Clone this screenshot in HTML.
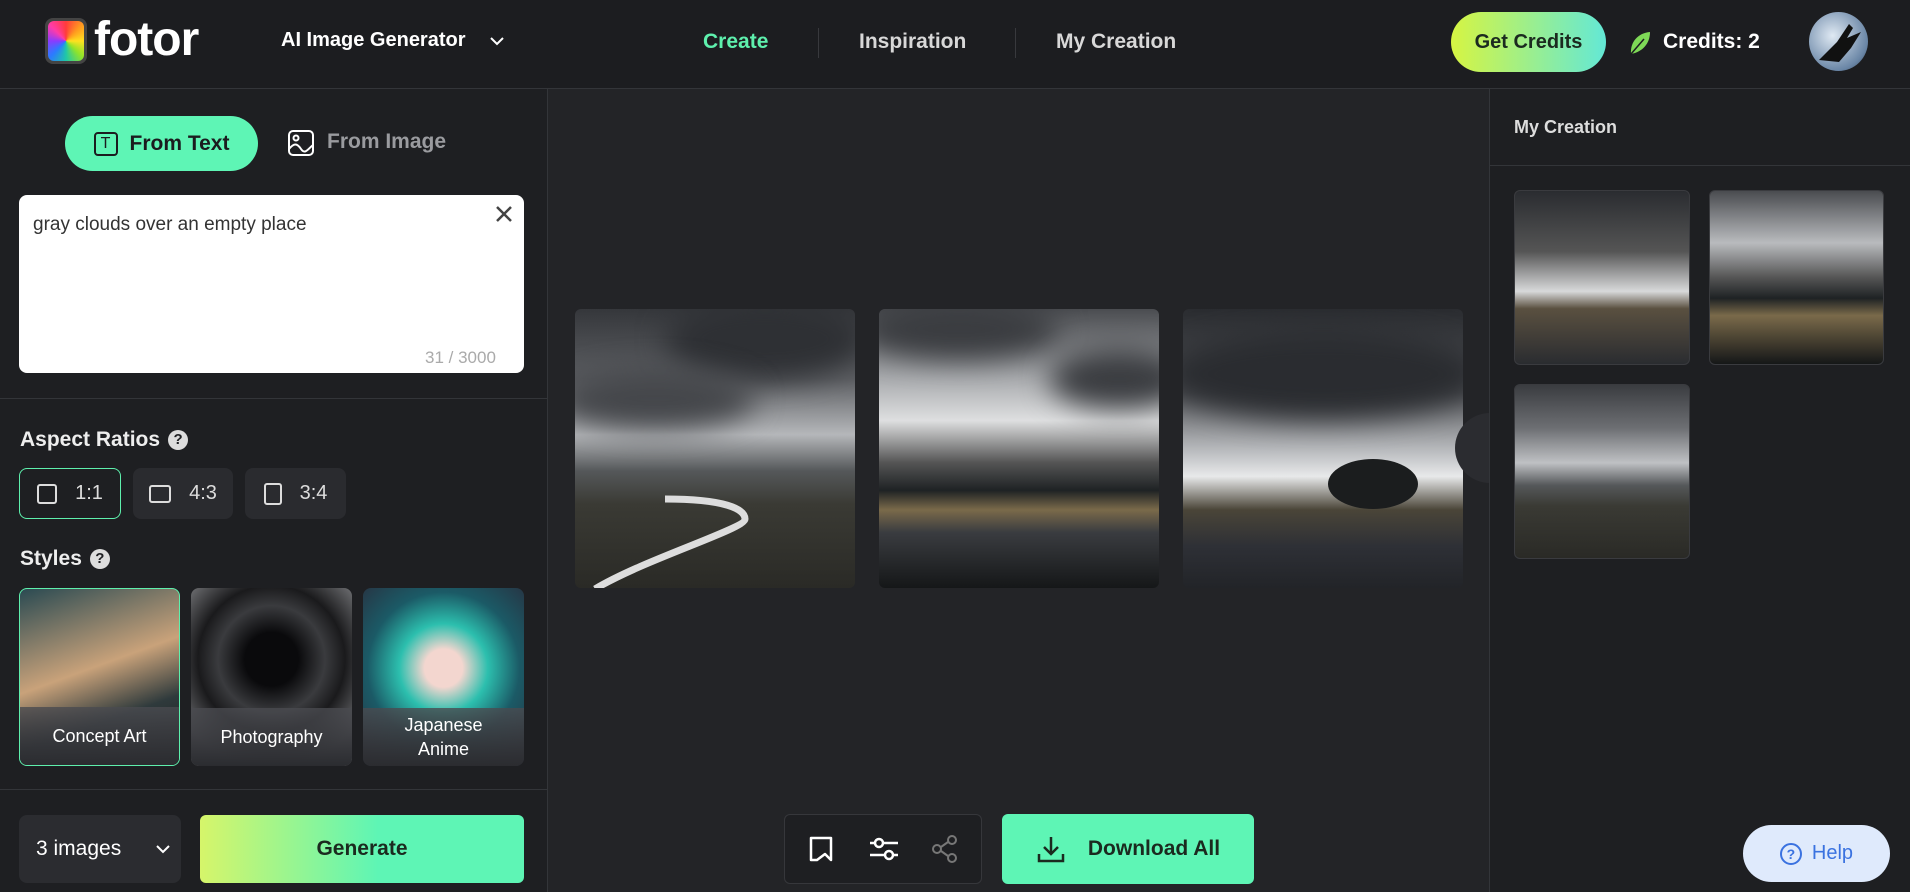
<!DOCTYPE html>
<html><head><meta charset="utf-8">
<style>
*{box-sizing:border-box;margin:0;padding:0}
body{width:1910px;height:892px;overflow:hidden;background:#232427;font-family:"Liberation Sans",sans-serif;color:#fff;position:relative}
.abs{position:absolute}
.hdr{left:0;top:0;width:1910px;height:89px;background:#1c1d20;border-bottom:1px solid #333539}
.left{left:0;top:89px;width:548px;height:803px;background:#1e1f22;border-right:1px solid #333539}
.right{left:1489px;top:89px;width:421px;height:803px;background:#1e1f22;border-left:1px solid #333539}
.nav{top:30px;font-size:21px;font-weight:bold;color:#d8d8d8}
.sep{top:28px;width:1px;height:30px;background:#38393d}
.ar{top:468px;height:51px;border-radius:8px;background:#2a2b2f;font-size:20px;display:flex;align-items:center;justify-content:center;gap:18px;color:#ddd}
.ar i{display:inline-block;width:20px;height:20px;border:2px solid #ddd;border-radius:3px}
.card{top:588px;width:161px;height:178px;border-radius:8px;overflow:hidden}
.card .lbl{position:absolute;left:0;bottom:0;width:100%;height:58px;background:linear-gradient(#4a4b50cc,#2b2c30);display:flex;align-items:center;justify-content:center;text-align:center;font-size:18px;line-height:24px}
.img{border-radius:6px;overflow:hidden}
.q{display:inline-block;width:20px;height:20px;border-radius:50%;background:#ddd;color:#1e1f22;font-size:15px;font-weight:bold;text-align:center;line-height:20px;vertical-align:middle;margin-left:8px}
.cl{position:absolute;border-radius:50%;background:#2e3034;filter:blur(14px)}
</style></head><body>
<div class="abs hdr"></div>
<div class="abs" style="left:45px;top:18px;width:42px;height:46px;border-radius:8px;background:#444;padding:3px">
<div style="width:100%;height:100%;border-radius:6px;background:conic-gradient(from 0deg,#ff3b3b,#ff9a1f,#ffe11f,#8fe32b,#1fc7a8,#2b7bff,#8a3bff,#ff3ba8,#ff3b3b)"></div></div>
<div class="abs" style="left:94px;top:12px;font-size:48px;font-weight:bold;letter-spacing:-1px">fotor</div>
<div class="abs" style="left:281px;top:29px;font-size:20px;font-weight:bold">AI Image Generator</div>
<svg class="abs" style="left:489px;top:35px" width="16" height="12" viewBox="0 0 16 12"><path d="M2 3l6 6 6-6" stroke="#fff" stroke-width="2" fill="none"/></svg>
<div class="abs nav" style="left:703px;color:#5ef0ad">Create</div>
<div class="abs sep" style="left:818px"></div>
<div class="abs nav" style="left:859px">Inspiration</div>
<div class="abs sep" style="left:1015px"></div>
<div class="abs nav" style="left:1056px">My Creation</div>
<div class="abs" style="left:1451px;top:12px;width:155px;height:60px;border-radius:30px;background:linear-gradient(90deg,#d6f542,#63e8d6);color:#1b2a1f;font-size:20px;font-weight:bold;display:flex;align-items:center;justify-content:center">Get Credits</div>
<svg class="abs" style="left:1628px;top:30px" width="24" height="26" viewBox="0 0 24 26"><path d="M3 24C2 12 10 3 22 2 22 14 14 22 3 24z" fill="#7ed957"/><path d="M3 24L16 9" stroke="#1c1d20" stroke-width="1.5"/></svg>
<div class="abs" style="left:1663px;top:30px;font-size:21px;font-weight:bold">Credits: 2</div>
<div class="abs" style="left:1809px;top:12px;width:59px;height:59px;border-radius:50%;background:radial-gradient(circle at 40% 40%,#dfe9f3,#6a86a6 70%,#2a3a50)"><svg width="59" height="59"><path d="M10 48 L28 30 L40 12 L44 16 L38 26 L52 20 L42 36 L30 50 Z" fill="#111"/></svg></div>

<div class="abs left"></div>
<div class="abs" style="left:65px;top:116px;width:193px;height:55px;border-radius:28px;background:#5ef5b5;display:flex;align-items:center;justify-content:center;gap:12px;color:#1b1c1f;font-size:21px;font-weight:bold"><span style="display:inline-block;width:24px;height:24px;border:2px solid #1b1c1f;border-radius:4px;font-size:16px;text-align:center;line-height:20px;font-weight:normal">T</span>From Text</div>
<svg class="abs" style="left:287px;top:129px" width="28" height="28" viewBox="0 0 28 28"><rect x="2" y="2" width="24" height="24" rx="4" stroke="#fff" stroke-width="2" fill="none"/><path d="M2 20c5-6 8-6 12 0s7 0 12-4" stroke="#fff" stroke-width="2" fill="none"/><circle cx="9" cy="9" r="2.5" stroke="#fff" stroke-width="2" fill="none"/></svg>
<div class="abs" style="left:327px;top:130px;font-size:21px;font-weight:bold;color:#9a9b9f">From Image</div>
<div class="abs" style="left:19px;top:195px;width:505px;height:178px;background:#fff;border-radius:8px"></div>
<div class="abs" style="left:33px;top:214px;font-size:19px;color:#333">gray clouds over an empty place</div>
<svg class="abs" style="left:494px;top:204px" width="20" height="20"><path d="M3 3l14 14M17 3L3 17" stroke="#444" stroke-width="2.5"/></svg>
<div class="abs" style="left:425px;top:348px;font-size:17px;color:#aaa">31 / 3000</div>
<div class="abs" style="left:0;top:398px;width:548px;height:1px;background:#333539"></div>
<div class="abs" style="left:20px;top:428px;font-size:21px;font-weight:bold;color:#eee">Aspect Ratios<span class="q">?</span></div>
<div class="abs ar" style="left:19px;width:102px;border:1.5px solid #5ef0ad;background:#1e1f22"><i></i>1:1</div>
<div class="abs ar" style="left:133px;width:100px"><i style="width:22px;height:18px"></i>4:3</div>
<div class="abs ar" style="left:245px;width:101px"><i style="width:18px;height:22px"></i>3:4</div>
<div class="abs" style="left:20px;top:547px;font-size:21px;font-weight:bold;color:#eee">Styles<span class="q">?</span></div>
<div class="abs card" style="left:19px;border:1.5px solid #5ef0ad;background:linear-gradient(160deg,#2a4a52,#c9a27a 45%,#2f3a3c 70%,#181818)"><div class="lbl">Concept Art</div></div>
<div class="abs card" style="left:191px;background:radial-gradient(circle at 50% 40%,#0a0a0c 20%,#3a3b3e 40%,#1a1a1c 55%,#6c6d70 80%)"><div class="lbl">Photography</div></div>
<div class="abs card" style="left:363px;background:radial-gradient(circle at 50% 45%,#f3d6cf 15%,#2cbfae 35%,#1b5a66 60%,#2a2a3a)"><div class="lbl">Japanese<br>Anime</div></div>
<div class="abs" style="left:0;top:789px;width:548px;height:1px;background:#333539"></div>
<div class="abs" style="left:19px;top:815px;width:162px;height:68px;border-radius:8px;background:#2b2c30;font-size:21px;display:flex;align-items:center;padding-left:17px">3 images</div>
<svg class="abs" style="left:155px;top:843px" width="16" height="12"><path d="M2 3l6 6 6-6" stroke="#fff" stroke-width="2" fill="none"/></svg>
<div class="abs" style="left:200px;top:815px;width:324px;height:68px;border-radius:6px;background:linear-gradient(90deg,#d6f56a,#5ef5b5 55%);color:#1b2a1f;font-size:21px;font-weight:bold;display:flex;align-items:center;justify-content:center">Generate</div>

<div class="abs img" style="left:575px;top:309px;width:280px;height:279px;background:linear-gradient(180deg,#35373b 0%,#5d5f63 25%,#b5b7ba 45%,#55585a 58%,#3a3a34 70%,#2a2a26 100%)"><div class="cl" style="left:90px;top:-10px;width:200px;height:80px"></div><div class="cl" style="left:-20px;top:60px;width:200px;height:60px;background:#44464a"></div><svg style="position:absolute;left:0;top:0" width="280" height="279"><path d="M90 190c60 0 80 10 80 20s-100 40-150 70" stroke="#ddd" stroke-width="7" fill="none"/></svg></div>
<div class="abs img" style="left:879px;top:309px;width:280px;height:279px;background:linear-gradient(180deg,#4a4c50 0%,#a9abae 25%,#dedfe0 40%,#555 55%,#1e2224 65%,#7a6a4a 72%,#3a3c40 80%,#151718 100%)"><div class="cl" style="left:-20px;top:-10px;width:200px;height:60px;background:#3a3c40"></div><div class="cl" style="left:170px;top:40px;width:140px;height:60px;background:#3a3c40"></div></div>
<div class="abs img" style="left:1183px;top:309px;width:280px;height:279px;background:linear-gradient(180deg,#2a2c30 0%,#55575b 30%,#bfc1c4 52%,#e8e9ea 60%,#4a4538 72%,#2e3036 85%,#222428 100%)"><div class="cl" style="left:-20px;top:20px;width:320px;height:90px;background:#2a2c30"></div><div style="position:absolute;left:145px;top:150px;width:90px;height:50px;border-radius:50%;background:#1b1d1e"></div></div>
<div class="abs" style="left:1455px;top:413px;width:36px;height:70px;border-radius:35px 0 0 35px;background:#2b2c30"></div>
<div class="abs" style="left:784px;top:814px;width:198px;height:70px;border:1px solid #36373b;border-radius:6px;background:#1e1f22"></div>
<svg class="abs" style="left:806px;top:834px" width="30" height="30" viewBox="0 0 30 30"><path d="M5 4h20v22l-6-6-8 6H5z" stroke="#fff" stroke-width="2.5" fill="none" stroke-linejoin="round"/></svg>
<svg class="abs" style="left:868px;top:834px" width="32" height="30" viewBox="0 0 32 30"><path d="M2 9h28M2 21h28" stroke="#fff" stroke-width="2.5"/><circle cx="11" cy="9" r="4" fill="#1e1f22" stroke="#fff" stroke-width="2.5"/><circle cx="21" cy="21" r="4" fill="#1e1f22" stroke="#fff" stroke-width="2.5"/></svg>
<svg class="abs" style="left:930px;top:834px" width="30" height="30" viewBox="0 0 30 30"><circle cx="22" cy="6" r="4" stroke="#777" stroke-width="2" fill="none"/><circle cx="7" cy="15" r="4" stroke="#777" stroke-width="2" fill="none"/><circle cx="22" cy="24" r="4" stroke="#777" stroke-width="2" fill="none"/><path d="M11 13l7-5M11 17l7 5" stroke="#777" stroke-width="2"/></svg>
<div class="abs" style="left:1002px;top:814px;width:252px;height:70px;border-radius:6px;background:#5ef5b5;color:#1b2a1f;font-size:21px;font-weight:bold;display:flex;align-items:center;justify-content:center;gap:22px"><svg width="30" height="30" viewBox="0 0 30 30"><path d="M15 3v16M8 13l7 7 7-7M3 20v7h24v-7" stroke="#1b2a1f" stroke-width="2.5" fill="none"/></svg>Download All</div>

<div class="abs right"></div>
<div class="abs" style="left:1514px;top:117px;font-size:18px;font-weight:bold;color:#ddd">My Creation</div>
<div class="abs" style="left:1490px;top:165px;width:420px;height:1px;background:#333539"></div>
<div class="abs img" style="left:1514px;top:190px;width:176px;height:175px;border:1px solid #3a3b3f;background:linear-gradient(180deg,#2a2c30 0%,#555 35%,#d8d9da 58%,#5a5040 68%,#2a2c30 100%)"></div>
<div class="abs img" style="left:1709px;top:190px;width:175px;height:175px;border:1px solid #3a3b3f;background:linear-gradient(180deg,#4a4c50 0%,#b9bbbe 30%,#555 50%,#1e2224 62%,#7a6a4a 72%,#151718 100%)"></div>
<div class="abs img" style="left:1514px;top:384px;width:176px;height:175px;border:1px solid #3a3b3f;background:linear-gradient(180deg,#3a3c40 0%,#6d6f73 25%,#bfc1c4 45%,#55585a 58%,#3a3a34 70%,#2a2a26 100%)"></div>
<div class="abs" style="left:1743px;top:825px;width:147px;height:57px;border-radius:29px;background:#dfeafc;color:#3a72e0;font-size:20px;display:flex;align-items:center;justify-content:center;gap:10px"><span style="display:inline-block;width:22px;height:22px;border:2px solid #3a72e0;border-radius:50%;font-size:14px;font-weight:bold;text-align:center;line-height:18px">?</span>Help</div>
</body></html>
